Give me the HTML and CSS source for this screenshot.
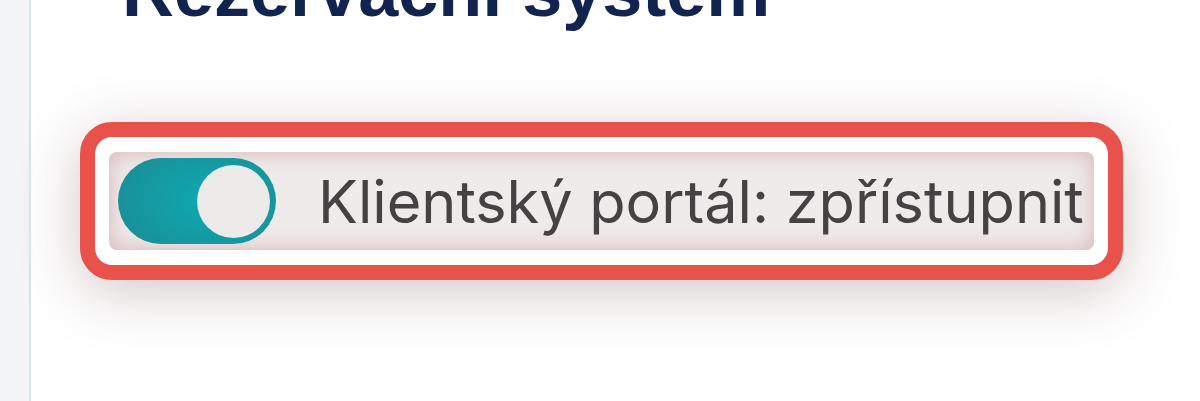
FILE: index.html
```html
<!DOCTYPE html>
<html lang="cs">
<head>
<meta charset="utf-8">
<title>Rezervační systém</title>
<link rel="stylesheet" href="styles.css">
</head>
<body>
<div class="page">
  <aside class="sidebar"></aside>
  <main class="main">
    <h1 class="title">Rezervační systém</h1>
    <div class="field">
      <label class="row">
        <span class="toggle"><span class="knob"></span></span>
        <span class="label">Klientský portál: zpřístupnit</span>
      </label>
    </div>
  </main>
</div>
</body>
</html>
```

FILE: styles.css
```css
html, body {
  margin: 0;
  padding: 0;
  background: #ffffff;
}

.page {
  display: flex;
  width: 1200px;
  height: 401px;
  overflow: hidden;
}

.sidebar {
  flex: 0 0 29px;
  background: #f3f4f6;
  border-right: 2px solid #d6e7eb;
}

.main {
  flex: 1;
  padding-left: 49px;
  background: #ffffff;
}

.title {
  margin: -49px 0 0 42px;
  font-family: "Liberation Sans", Arial, sans-serif;
  font-weight: 700;
  font-size: 72px;
  line-height: 80px;
  color: #10244f;
  white-space: nowrap;
}

.field {
  margin-top: 91px;
  width: 1043px;
  box-sizing: border-box;
  border: 15px solid #e8524a;
  border-radius: 32px;
  padding: 15px 14px;
  background: #ffffff;
  box-shadow: 0 12px 60px rgba(110, 70, 70, 0.3);
}

.row {
  display: flex;
  align-items: center;
  gap: 42px;
  height: 98px;
  padding-left: 9px;
  border-radius: 8px;
  background: #efebeb;
  box-shadow: inset 0 0 22px rgba(205, 150, 150, 0.65);
}

.toggle {
  display: flex;
  align-items: center;
  justify-content: flex-end;
  box-sizing: border-box;
  width: 158px;
  height: 86px;
  padding-right: 6px;
  border-radius: 43px;
  background: radial-gradient(ellipse 70% 90% at 55% 50%, #10a8b0 0%, #16979f 60%, #1b8a92 100%);
}

.knob {
  width: 73px;
  height: 73px;
  border-radius: 50%;
  background: #edeaea;
}

.label {
  font-family: "Inter", "Noto Sans", sans-serif;
  font-size: 59.4px;
  color: #444242;
  white-space: nowrap;
}
```
